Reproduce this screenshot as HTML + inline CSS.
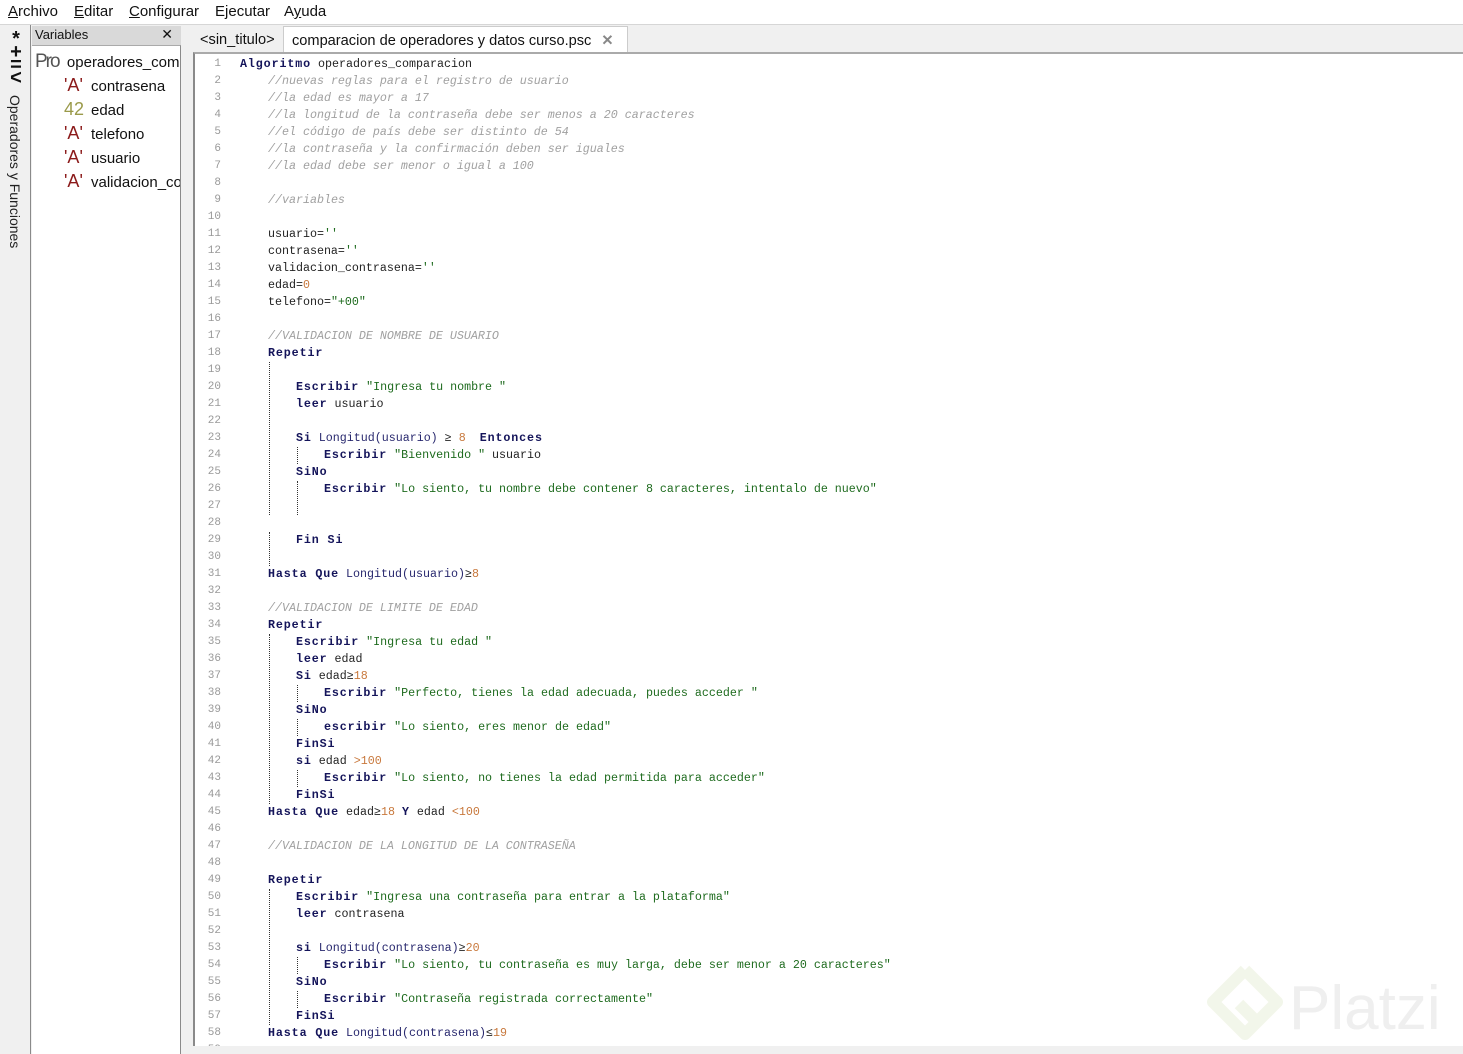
<!DOCTYPE html>
<html><head><meta charset="utf-8"><style>
*{margin:0;padding:0;box-sizing:border-box}
body{width:1463px;height:1054px;overflow:hidden;background:#f0f0f0;font-family:"Liberation Sans",sans-serif;position:relative}
#menu{position:absolute;left:0;top:0;width:1463px;height:25px;background:#fff;border-bottom:1px solid #d6d6d6;font-size:15px;color:#111}
#menu span{position:absolute;top:3px}
#menu u{text-decoration:underline}
#strip{position:absolute;left:0;top:25px;width:31px;height:1029px;background:#f0f0f0;border-right:1px solid #8a8a8a}
#vt{position:absolute;left:7px;top:70px;writing-mode:vertical-rl;font-size:14px;color:#222}
#varhead{position:absolute;left:32px;top:26px;width:149px;height:19px;background:#d9d9d9;font-size:13px;color:#111;padding:1px 0 0 3px}
#varhead b{position:absolute;right:8px;top:0;font-weight:normal;font-size:14px}
#vars{position:absolute;left:32px;top:45px;width:149px;height:1009px;background:#fff;border-right:1px solid #8a8a8a;border-top:1px solid #aaa;overflow:hidden;font-size:15px;color:#111}
.v{position:absolute;white-space:nowrap}
.A{color:#8b1a1a;font-size:18px;display:inline-block;width:27px}
#split{position:absolute;left:182px;top:25px;width:11px;height:1029px;background:#f0f0f0}
#tabs{position:absolute;left:193px;top:26px;width:1270px;height:27px;background:#f0f0f0;font-size:14.6px;color:#111}
.tab{position:absolute;top:3px;height:24px;padding:3px 0 0 0}
#ed{position:absolute;left:193px;top:52px;width:1270px;height:994px;background:#fff;border-left:2px solid #8a8a8a;border-top:2px solid #aaa;overflow:hidden}
#bot{position:absolute;left:193px;top:1046px;width:1270px;height:8px;background:#f0f0f0}
.ln{position:absolute;left:0;width:26px;text-align:right;font-family:"Liberation Mono",monospace;font-size:11px;color:#999;line-height:17px}
.cl{position:absolute;left:45px;font-family:"Liberation Mono",monospace;font-size:11.67px;line-height:17px;white-space:pre;color:#222}
.k{font-weight:bold;color:#14145a;letter-spacing:0.9px}
.c{color:#a0a0a0;font-style:italic}
.s{color:#1e6b1e}
.n{color:#c8783c}
.f{color:#28286e}
.g{position:absolute;width:0;border-left:1px dotted #333}
</style></head><body>
<div id="menu">
<span style="left:8px"><u>A</u>rchivo</span>
<span style="left:74px"><u>E</u>ditar</span>
<span style="left:129px"><u>C</u>onfigurar</span>
<span style="left:215px">E<u>j</u>ecutar</span>
<span style="left:284px">A<u>y</u>uda</span>
</div>
<div id="strip">
<div style="position:absolute;left:8px;top:8px;font-size:20px;font-weight:bold;line-height:13px;color:#111;text-align:center;width:16px">*<br>+<br>=<br>&lt;</div>
<div id="vt">Operadores y Funciones</div>
</div>
<div id="varhead">Variables<b>✕</b></div>
<div id="vars">
<div class="v" style="left:3px;top:5px"><span style="font-size:19px;color:#555;letter-spacing:-2px">Pro</span>&nbsp; operadores_comparacion</div>
<div class="v" style="left:32px;top:29px"><span class="A">'A'</span>contrasena</div>
<div class="v" style="left:32px;top:53px"><span class="A" style="color:#9a9a4a">42</span>edad</div>
<div class="v" style="left:32px;top:77px"><span class="A">'A'</span>telefono</div>
<div class="v" style="left:32px;top:101px"><span class="A">'A'</span>usuario</div>
<div class="v" style="left:32px;top:125px"><span class="A">'A'</span>validacion_contrasena</div>
</div>
<div id="split"></div>
<div id="tabs">
<div class="tab" style="left:0;width:93px;padding-left:7px;border-right:1px solid #ccc">&lt;sin_titulo&gt;</div>
<div class="tab" style="left:90px;width:345px;top:0;height:27px;padding:5px 0 0 8px;background:#fff;border:1px solid #ccc;border-bottom:none">comparacion de operadores y datos curso.psc <span style="color:#888;margin-left:6px;font-weight:bold">✕</span></div>
</div>
<div id="ed">
<div id="code"></div>
<svg style="position:absolute;left:1010px;top:908px" width="250" height="80" viewBox="0 0 250 80">
<path d="M40 8 L8 40 L40 72 L52 60 L34 42 M40 8 L72 40 L52 60" fill="none" stroke="#f2f6ea" stroke-width="12" stroke-linejoin="round"/>
<text x="84" y="67" font-family="Liberation Sans,sans-serif" font-size="62" fill="#efefef">Platzi</text>
</svg>
</div>
<div id="bot"></div>
<script>
var L=[
'<span class="k">Algoritmo</span> operadores_comparacion',
'    <span class="c">//nuevas reglas para el registro de usuario</span>',
'    <span class="c">//la edad es mayor a 17</span>',
'    <span class="c">//la longitud de la contraseña debe ser menos a 20 caracteres</span>',
'    <span class="c">//el código de país debe ser distinto de 54</span>',
'    <span class="c">//la contraseña y la confirmación deben ser iguales</span>',
'    <span class="c">//la edad debe ser menor o igual a 100</span>',
'',
'    <span class="c">//variables</span>',
'',
'    usuario=<span class="s">\'\'</span>',
'    contrasena=<span class="s">\'\'</span>',
'    validacion_contrasena=<span class="s">\'\'</span>',
'    edad=<span class="n">0</span>',
'    telefono=<span class="s">"+00"</span>',
'',
'    <span class="c">//VALIDACION DE NOMBRE DE USUARIO</span>',
'    <span class="k">Repetir</span>',
'',
'        <span class="k">Escribir</span> <span class="s">"Ingresa tu nombre "</span>',
'        <span class="k">leer</span> usuario',
'',
'        <span class="k">Si</span> <span class="f">Longitud(usuario)</span> ≥ <span class="n">8</span>  <span class="k">Entonces</span>',
'            <span class="k">Escribir</span> <span class="s">"Bienvenido "</span> usuario',
'        <span class="k">SiNo</span>',
'            <span class="k">Escribir</span> <span class="s">"Lo siento, tu nombre debe contener 8 caracteres, intentalo de nuevo"</span>',
'',
'',
'        <span class="k">Fin Si</span>',
'',
'    <span class="k">Hasta Que</span> <span class="f">Longitud(usuario)</span>≥<span class="n">8</span>',
'',
'    <span class="c">//VALIDACION DE LIMITE DE EDAD</span>',
'    <span class="k">Repetir</span>',
'        <span class="k">Escribir</span> <span class="s">"Ingresa tu edad "</span>',
'        <span class="k">leer</span> edad',
'        <span class="k">Si</span> edad≥<span class="n">18</span>',
'            <span class="k">Escribir</span> <span class="s">"Perfecto, tienes la edad adecuada, puedes acceder "</span>',
'        <span class="k">SiNo</span>',
'            <span class="k">escribir</span> <span class="s">"Lo siento, eres menor de edad"</span>',
'        <span class="k">FinSi</span>',
'        <span class="k">si</span> edad <span class="n">&gt;100</span>',
'            <span class="k">Escribir</span> <span class="s">"Lo siento, no tienes la edad permitida para acceder"</span>',
'        <span class="k">FinSi</span>',
'    <span class="k">Hasta Que</span> edad≥<span class="n">18</span> <span class="k">Y</span> edad <span class="n">&lt;100</span>',
'',
'    <span class="c">//VALIDACION DE LA LONGITUD DE LA CONTRASEÑA</span>',
'',
'    <span class="k">Repetir</span>',
'        <span class="k">Escribir</span> <span class="s">"Ingresa una contraseña para entrar a la plataforma"</span>',
'        <span class="k">leer</span> contrasena',
'',
'        <span class="k">si</span> <span class="f">Longitud(contrasena)</span>≥<span class="n">20</span>',
'            <span class="k">Escribir</span> <span class="s">"Lo siento, tu contraseña es muy larga, debe ser menor a 20 caracteres"</span>',
'        <span class="k">SiNo</span>',
'            <span class="k">Escribir</span> <span class="s">"Contraseña registrada correctamente"</span>',
'        <span class="k">FinSi</span>',
'    <span class="k">Hasta Que</span> <span class="f">Longitud(contrasena)</span>≤<span class="n">19</span>',
''];
var h='';
for(var i=0;i<L.length;i++){var t=2+i*17;
h+='<div class="ln" style="top:'+t+'px">'+(i+1)+'</div><div class="cl" style="top:'+t+'px">'+L[i]+'</div>';}
var G=[[19,27,74],[24,24,102],[26,27,102],[29,30,74],[35,44,74],[38,38,102],[40,40,102],[43,43,102],[50,57,74],[54,54,102],[56,56,102]];
G.forEach(function(g){h+='<div class="g" style="left:'+g[2]+'px;top:'+(2+(g[0]-1)*17)+'px;height:'+((g[1]-g[0]+1)*17)+'px"></div>';});
document.getElementById('code').innerHTML=h;
</script>
</body></html>
